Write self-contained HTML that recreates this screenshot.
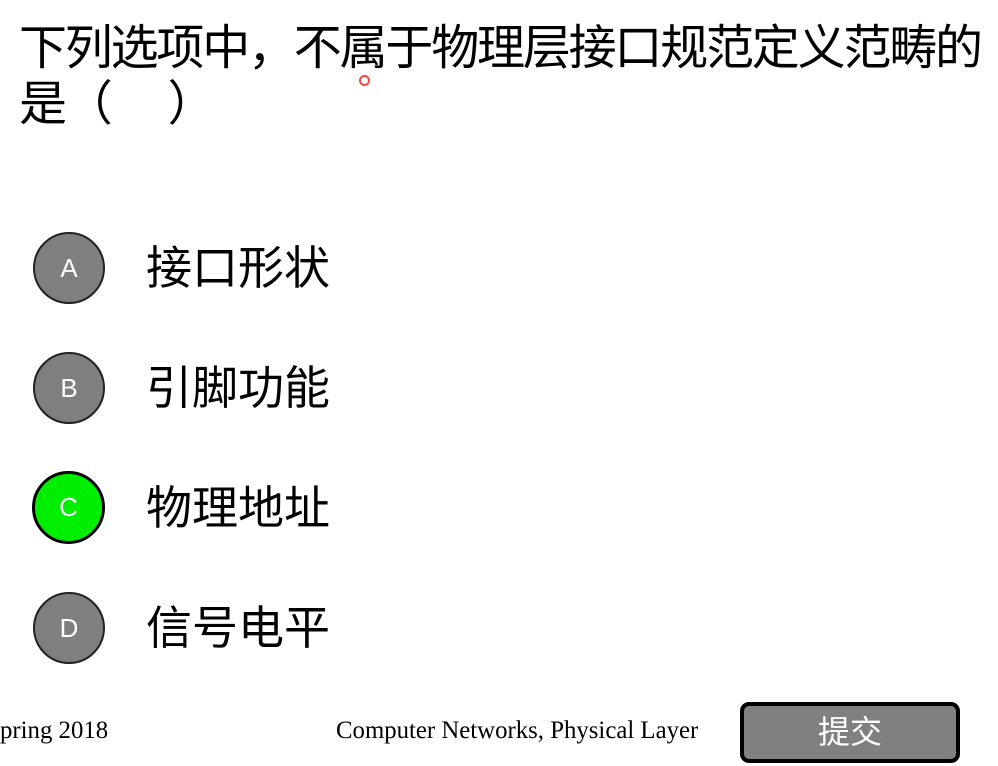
<!DOCTYPE html>
<html><head><meta charset="utf-8"><style>
body{margin:0;width:998px;height:766px;background:#fff;position:relative;overflow:hidden;font-family:"Liberation Sans","Noto Sans CJK SC",sans-serif}
.t{position:absolute;left:19px;top:21px;font-size:48px;line-height:56px;white-space:nowrap;color:#000;letter-spacing:-2.2px}
.c{position:absolute;width:68px;height:68px;border:2px solid #222;border-radius:50%;background:#7f7f7f;color:#fff;font-size:26px;text-align:center;line-height:68px}
.o{position:absolute;left:146px;font-size:46px;line-height:56px;color:#000;white-space:nowrap}
.f{position:absolute;font-family:"Liberation Serif",serif;font-size:24.8px;top:717px;white-space:nowrap}
</style></head><body>
<div class="t">下列选项中，不属于物理层接口规范定义范畴的<br>是（<span style="display:inline-block;width:57px"></span>）</div>
<div style="position:absolute;left:359px;top:75px;width:7px;height:7px;border:2px solid #f44;border-radius:50%"></div>
<div class="c" style="left:33px;top:232px">A</div><div class="o" style="top:240px">接口形状</div>
<div class="c" style="left:33px;top:352px">B</div><div class="o" style="top:360px">引脚功能</div>
<div class="c" style="left:32px;top:471px;background:#00ee00;border:3px solid #000;width:67px;height:67px;line-height:67px">C</div><div class="o" style="top:480px">物理地址</div>
<div class="c" style="left:33px;top:592px">D</div><div class="o" style="top:600px">信号电平</div>
<div class="f" style="left:0">pring 2018</div>
<div class="f" style="left:336px">Computer Networks, Physical Layer</div>
<div style="position:absolute;left:740px;top:702px;width:212px;height:53px;border:4px solid #000;border-radius:9px;background:#808080;color:#fff;font-size:32px;text-align:center;line-height:53px">提交</div>
</body></html>
